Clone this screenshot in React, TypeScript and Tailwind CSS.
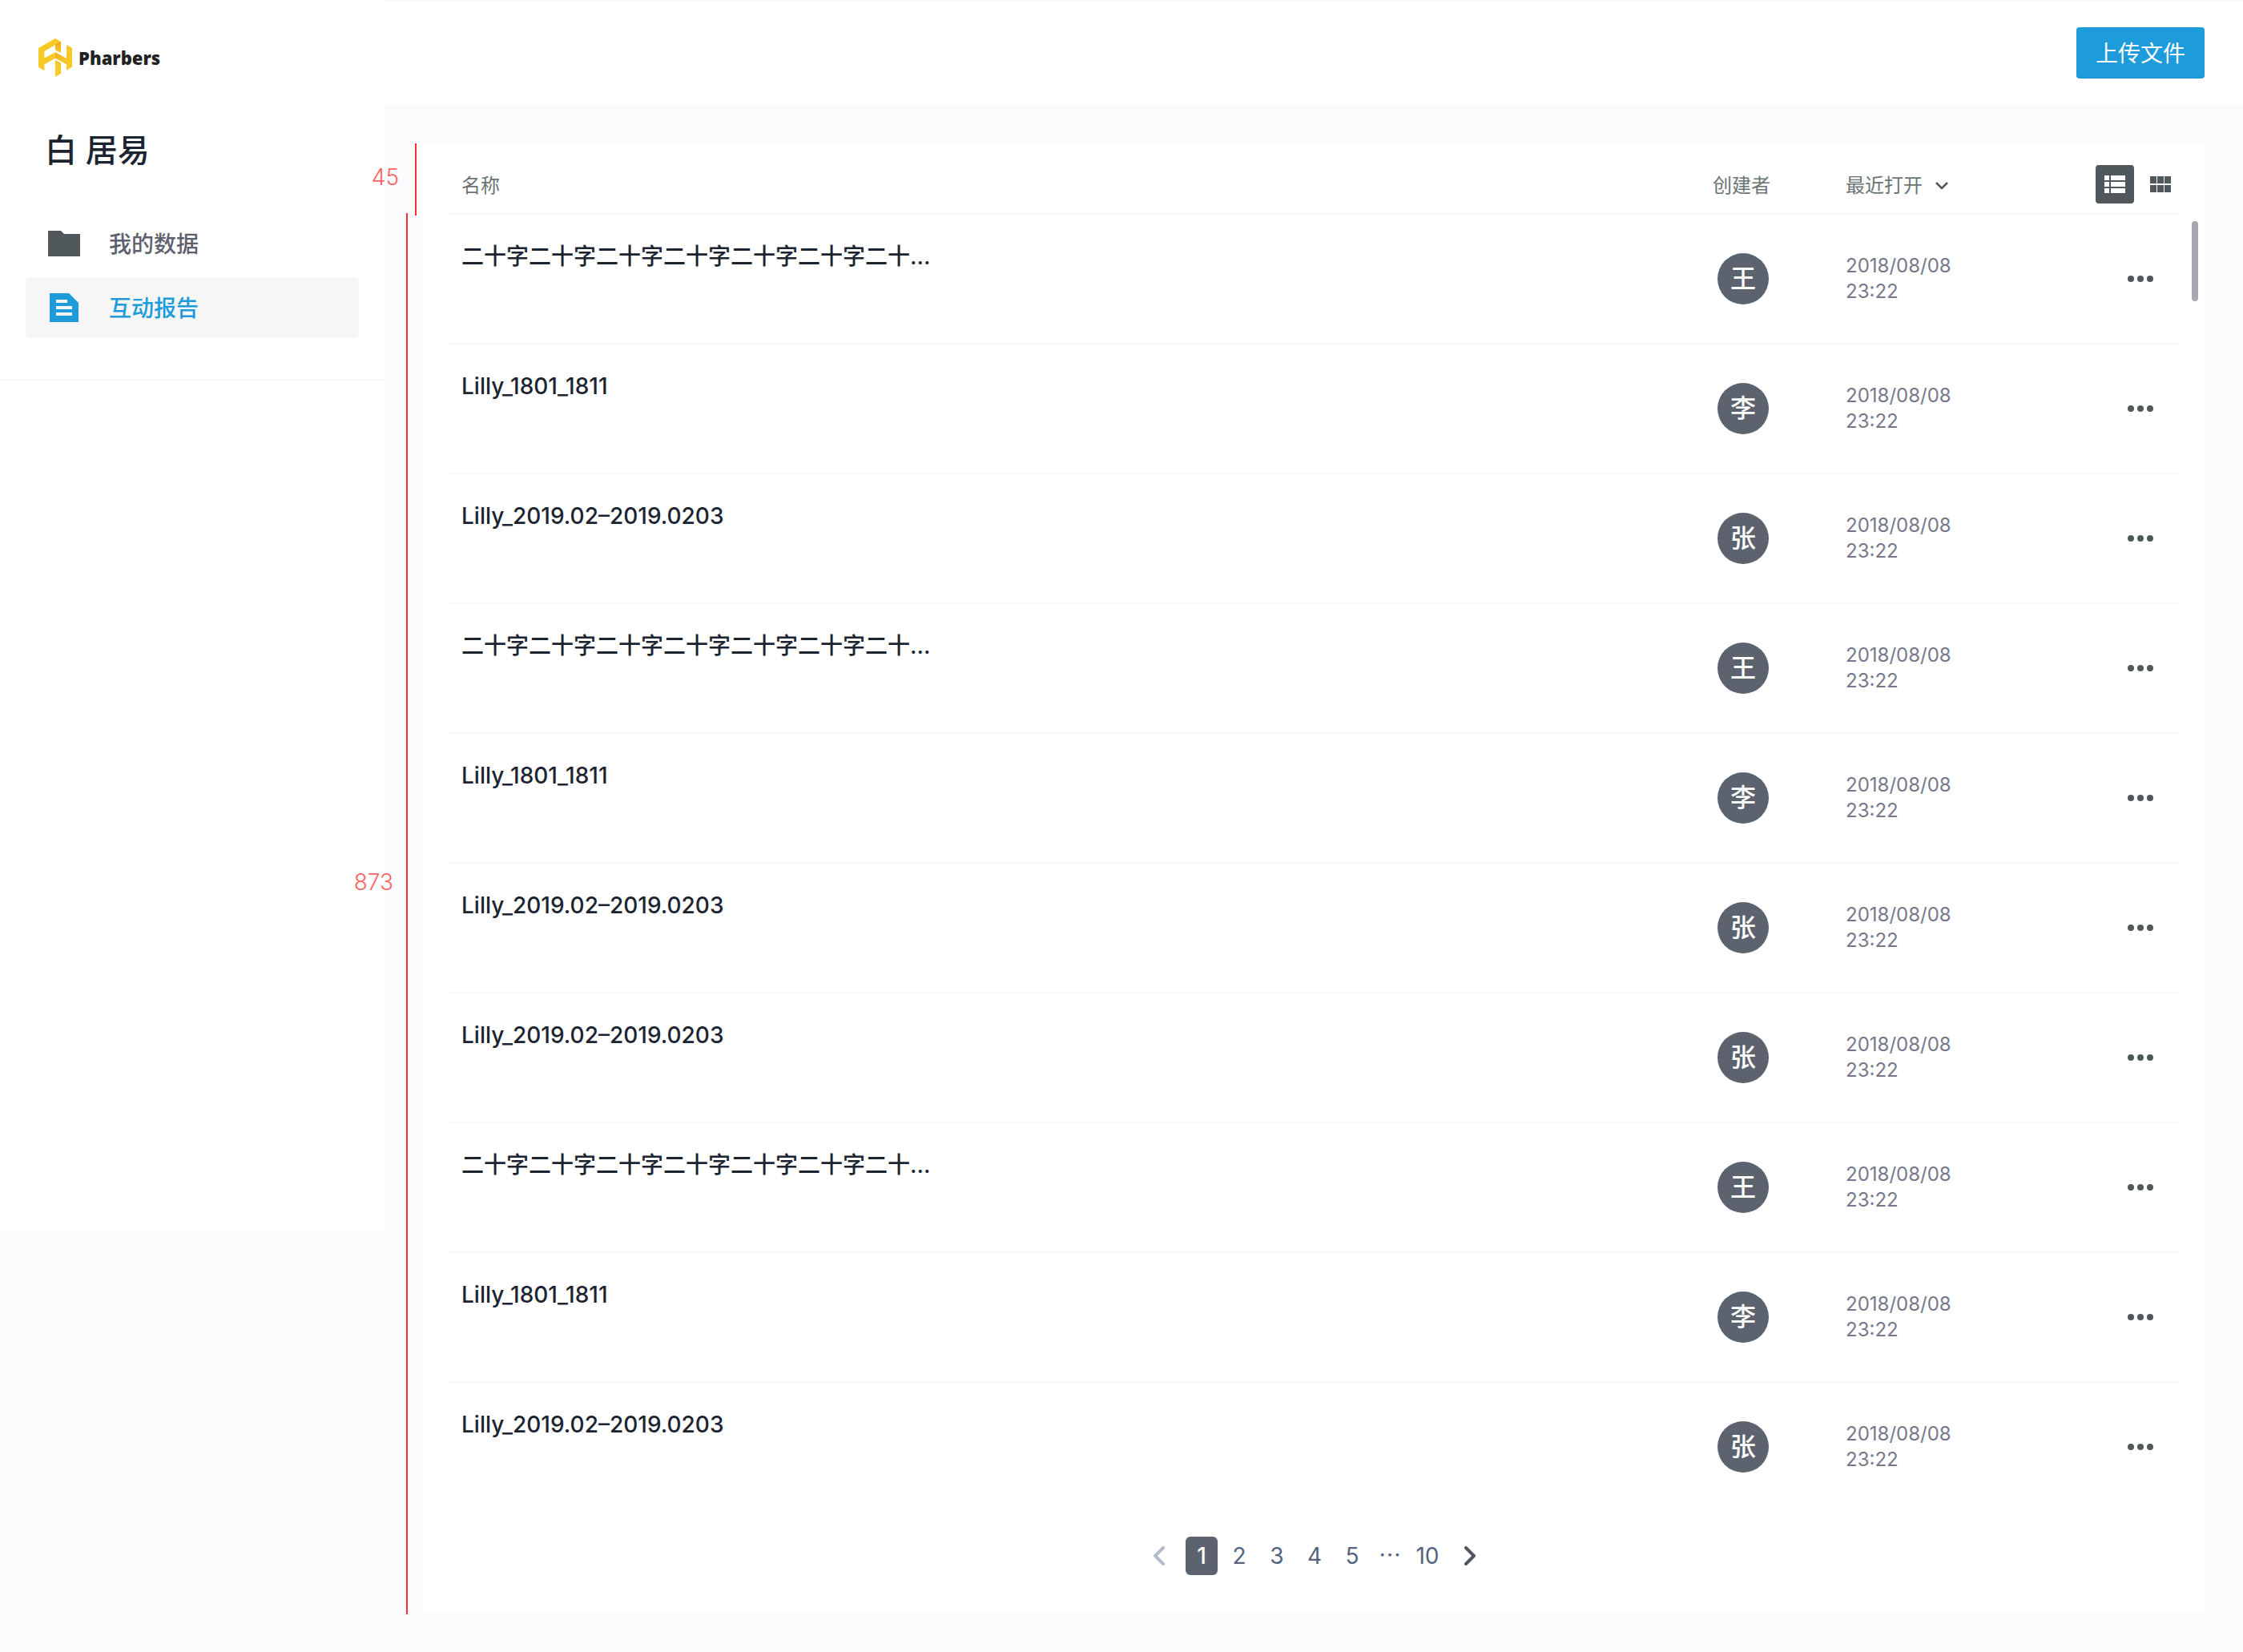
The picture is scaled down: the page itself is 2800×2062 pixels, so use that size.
import React from "react";

type Report = { name: string; owner: string };

const LONG_NAME = "二十字二十字二十字二十字二十字二十字二十...";
const LILLY_SHORT = "Lilly_1801_1811";
const LILLY_LONG = "Lilly_2019.02–2019.0203";

const reports: Report[] = [
  { name: LONG_NAME, owner: "王" },
  { name: LILLY_SHORT, owner: "李" },
  { name: LILLY_LONG, owner: "张" },
  { name: LONG_NAME, owner: "王" },
  { name: LILLY_SHORT, owner: "李" },
  { name: LILLY_LONG, owner: "张" },
  { name: LILLY_LONG, owner: "张" },
  { name: LONG_NAME, owner: "王" },
  { name: LILLY_SHORT, owner: "李" },
  { name: LILLY_LONG, owner: "张" },
];

function Logo() {
  return (
    <a href="#" className="flex h-12 items-center gap-2">
      <svg width="42" height="48" viewBox="0 0 42 48" aria-hidden="true">
        <defs>
          <linearGradient id="fold" x1="0" y1="0" x2="0" y2="1">
            <stop offset="0" stopColor="#eda90f" />
            <stop offset="1" stopColor="#f6c926" />
          </linearGradient>
          <linearGradient id="beam" x1="0" y1="0" x2="1" y2="0.6">
            <stop offset="0" stopColor="#eeb01a" />
            <stop offset="1" stopColor="#f6c926" />
          </linearGradient>
        </defs>
        <path fill="#f6c926" d="M0 12 21 0 28 4 7.400 16V24.600L21 17.200V24.800L7.400 32.200V40L0 36Z" />
        <path fill="url(#fold)" d="M21 7.500 28 3.800V18L21 14.600Z" />
        <path fill="url(#beam)" d="M21 17.200 35 24.800V32.200L21 24.600Z" />
        <path fill="#f6c926" d="M35 8 42 12V35.600L35 39.800Z" />
        <path fill="#f6c926" d="M21 26.800 28 30.600V43.800L21 48Z" />
      </svg>
      <span className="font-['Open_Sans'] text-[22px] leading-8 font-extrabold text-[#222222]">Pharbers</span>
    </a>
  );
}

function FolderIcon() {
  return (
    <svg width="40" height="32" viewBox="0 0 40 32" fill="#50585b" aria-hidden="true">
      <path d="M0 0H16L20 4H40V32H0Z" />
    </svg>
  );
}

function ReportIcon() {
  return (
    <svg width="40" height="36" viewBox="0 0 40 36" aria-hidden="true">
      <path fill="#1d9bda" d="M2 0H26L38 12V36H2Z" />
      <path fill="#f6f6f6" d="M10 8H24V12H10ZM10 16H30V20H10ZM10 24H30V28H10Z" />
    </svg>
  );
}

function Chevron({ d, className }: { d: string; className: string }) {
  return (
    <svg width="16" height="24" viewBox="0 0 16 24" fill="none" stroke="currentColor" strokeWidth="4" strokeLinecap="round" strokeLinejoin="round" className={className} aria-hidden="true">
      <path d={d} />
    </svg>
  );
}

function Sidebar() {
  return (
    <aside className="min-h-[1536px] w-[480px] shrink-0 self-start bg-white">
      <div className="border-b-2 border-[#f7f7f8] px-8 pt-12 pb-[51px]">
        <div className="px-4">
          <Logo />
        </div>
        <h1 className="mt-16 px-6 text-[40px] leading-14 font-medium text-[#1c2431]">白 居易</h1>
        <nav className="mt-[50px] flex flex-col gap-1 text-[28px] leading-10 font-medium">
          <a href="#data" className="flex h-[76px] items-center gap-9 rounded-md px-7 text-[#5c616d]">
            <FolderIcon />
            <span className="pt-0.5">我的数据</span>
          </a>
          <a href="#reports" aria-current="page" className="flex h-[76px] items-center gap-9 rounded-md bg-[#f6f6f6] px-7 text-[#1d9bda]">
            <ReportIcon />
            <span className="pt-0.5">互动报告</span>
          </a>
        </nav>
      </div>
    </aside>
  );
}

function ReportTable() {
  return (
    <table className="w-full table-fixed border-separate border-spacing-0 text-left">
      <colgroup>
        <col />
        <col className="w-[166px]" />
        <col className="w-[240px]" />
        <col className="w-[176px]" />
      </colgroup>
      <thead>
        <tr className="h-[90px] text-2xl leading-8 text-[#6b7474] *:border-b-2 *:border-[#f6f7f7]">
          <th className="pt-5 pl-4 font-normal">名称</th>
          <th className="pt-5 font-normal">创建者</th>
          <th className="pt-5 font-normal">
            <button className="flex items-center gap-4">
              最近打开
              <svg width="16" height="12" viewBox="0 0 16 12" fill="none" stroke="#50585b" strokeWidth="2.5" aria-hidden="true">
                <path d="M1 2 8 9 15 2" />
              </svg>
            </button>
          </th>
          <th className="pt-4 pr-[10px]">
            <div className="flex items-center justify-end gap-5">
              <button aria-label="列表视图" aria-pressed="true" className="flex size-12 items-center justify-center rounded bg-[#50585b]">
                <svg width="26" height="22" viewBox="0 0 26 22" fill="#ffffff" aria-hidden="true">
                  <path d="M0 0H6V6H0ZM8 0H26V6H8ZM0 8H6V14H0ZM8 8H26V14H8ZM0 16H6V22H0ZM8 16H26V22H8Z" />
                </svg>
              </button>
              <button aria-label="网格视图" className="flex h-12 items-center">
                <svg width="26" height="20" viewBox="0 0 26 20" fill="#50585b" aria-hidden="true">
                  <path d="M0 0H8V9H0ZM9 0H17V9H9ZM18 0H26V9H18ZM0 11H8V20H0ZM9 11H17V20H9ZM18 11H26V20H18Z" />
                </svg>
              </button>
            </div>
          </th>
        </tr>
      </thead>
      <tbody>
        {reports.map((report, index) => (
          <tr key={index} className="h-[162px] *:border-b-2 *:border-[#f6f7f7] last:h-40 last:*:border-b-0">
            <td className="pt-8 pl-4 align-top text-[28px] leading-10 font-medium text-[#1c2431]">{report.name}</td>
            <td>
              <span className="ml-1.5 flex size-16 items-center justify-center rounded-full bg-[#5c626e] text-[32px] leading-none font-medium text-white">
                {report.owner}
              </span>
            </td>
            <td className="text-2xl leading-8 text-[#76788a]">
              2018/08/08
              <br />
              23:22
            </td>
            <td className="pr-8">
              <button aria-label="更多操作" className="ml-auto flex h-8 items-center gap-1">
                <span className="size-2 rounded-full bg-[#50585b]" />
                <span className="size-2 rounded-full bg-[#50585b]" />
                <span className="size-2 rounded-full bg-[#50585b]" />
              </button>
            </td>
          </tr>
        ))}
      </tbody>
    </table>
  );
}

function Pagination() {
  return (
    <nav aria-label="分页" className="mt-8 flex h-12 items-center justify-center gap-[7px] pl-0.5 text-[28px] leading-10 text-[#54637f]">
      <button aria-label="上一页" className="flex w-[52px] justify-center">
        <Chevron d="M13 2 3 12 13 22" className="text-[#b4bbc9]" />
      </button>
      <button aria-current="page" className="h-12 w-10 rounded-md bg-[#5c626e] font-medium text-white">1</button>
      <button className="w-10">2</button>
      <button className="w-10">3</button>
      <button className="w-10">4</button>
      <button className="w-10">5</button>
      <span className="w-10 text-center">⋯</span>
      <button className="w-10">10</button>
      <button aria-label="下一页" className="flex w-[52px] justify-center">
        <Chevron d="M3 2 13 12 3 22" className="text-[#50555f]" />
      </button>
    </nav>
  );
}

export default function App() {
  return (
    <div lang="zh-CN" className="flex min-h-screen bg-[#fafbfd] font-[Inter,'Noto_Sans_CJK_SC',sans-serif]">
      <Sidebar />
      <div className="flex min-w-0 flex-1 flex-col">
        <header className="flex h-[130px] items-center justify-end border-t-2 border-[#fafafa] bg-white px-12">
          <button className="h-16 w-40 rounded bg-[#1d9bda] pt-0.5 text-[28px] leading-10 text-white">上传文件</button>
        </header>
        <main className="relative flex-1 p-12">
          <div className="absolute top-[49px] right-full -mr-10 flex h-[90px] items-center border-r-2 border-[#ff3030] pr-5 pb-1.5 text-[28px] leading-8 font-light text-[#ff6262]">45</div>
          <div className="absolute top-[136px] right-full bottom-[47px] -mr-[29px] flex items-center border-r-2 border-[#ff3030] pr-4 pb-20 text-[28px] leading-8 font-light text-[#ff6262]">873</div>
          <section className="relative bg-white px-8 pb-12">
            <ReportTable />
            <Pagination />
            <div className="absolute top-[98px] right-2 h-[100px] w-2 rounded-full bg-[#a8a8ae]" />
          </section>
        </main>
      </div>
    </div>
  );
}
